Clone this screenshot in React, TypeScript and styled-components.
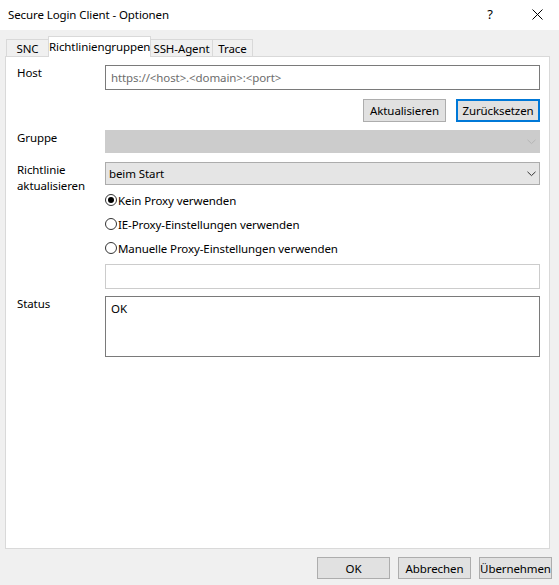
import React from "react";
import styled, { createGlobalStyle } from "styled-components";

const GlobalStyle = createGlobalStyle`
  html, body {
    margin: 0;
    padding: 0;
    background: #f0f0f0;
  }
  body {
    font-family: "Noto Sans", "Open Sans", sans-serif;
    font-size: 11.5px;
    letter-spacing: -0.1px;
    color: #000;
  }
  * { box-sizing: border-box; }
`;

const Window = styled.div`
  width: 559px;
  height: 585px;
  background: #f0f0f0;
  display: flex;
  flex-direction: column;
  overflow: hidden;
`;

const TitleBar = styled.div`
  height: 30px;
  background: #ffffff;
  display: flex;
  align-items: center;
  padding-left: 8px;
  flex-shrink: 0;
`;

const Title = styled.div`
  flex: 1;
  line-height: 16px;
  margin-top: -1px;
`;

const TitleButtons = styled.div`
  display: flex;
  align-items: center;
  height: 100%;
`;

const HelpGlyph = styled.div`
  width: 46px;
  text-align: center;
  font-size: 13px;
  line-height: 16px;
  margin-top: -2px;
  padding-left: 0px;
`;

const CloseButton = styled.div`
  width: 46px;
  height: 100%;
  display: flex;
  align-items: center;
  justify-content: center;
  padding-left: 2px;
  padding-bottom: 2px;
`;

const TabStrip = styled.div`
  display: flex;
  align-items: flex-end;
  height: 20px;
  margin-top: 6px;
  padding-left: 6px;
  flex-shrink: 0;
`;

const Tab = styled.div<{ $active?: boolean; $w: number }>`
  width: ${(p) => p.$w}px;
  height: ${(p) => (p.$active ? 21 : 17)}px;
  margin-bottom: ${(p) => (p.$active ? -1 : 0)}px;
  margin-left: -1px;
  &:first-child { margin-left: 0; }
  border: 1px solid #d9d9d9;
  border-bottom: none;
  background: ${(p) => (p.$active ? "#ffffff" : "#f0f0f0")};
  position: ${(p) => (p.$active ? "relative" : "static")};
  z-index: ${(p) => (p.$active ? 1 : 0)};
  line-height: 15px;
  padding-top: ${(p) => (p.$active ? 2 : 1)}px;
  text-align: center;
  white-space: nowrap;
`;

const Panel = styled.div`
  height: 493px;
  margin-left: 5px;
  width: 545px;
  background: #ffffff;
  border: 1px solid #d9d9d9;
  padding: 8px 9px 0 11px;
  display: flex;
  flex-direction: column;
  flex-shrink: 0;
`;

const FieldRow = styled.div<{ $mt?: number }>`
  display: grid;
  grid-template-columns: 88px 435px;
  margin-top: ${(p) => p.$mt ?? 0}px;
`;

const Label = styled.div<{ $span?: number }>`
  line-height: 16px;
  grid-row: ${(p) => (p.$span ? `1 / span ${p.$span}` : "auto")};
`;

const TextBox = styled.div<{ $h: number; $muted?: boolean; $light?: boolean }>`
  height: ${(p) => p.$h}px;
  border: 1px solid ${(p) => (p.$light ? "#cccccc" : "#7a7a7a")};
  background: #ffffff;
  color: ${(p) => (p.$muted ? "#6d6d6d" : "#000000")};
  padding: 4px 5px 0 5px;
  line-height: 15px;
  white-space: nowrap;
`;

const Combo = styled.div<{ $disabled?: boolean }>`
  height: 23px;
  border: 1px solid ${(p) => (p.$disabled ? "#cccccc" : "#acacac")};
  background: ${(p) => (p.$disabled ? "#cccccc" : "#e5e5e5")};
  display: flex;
  align-items: center;
  justify-content: space-between;
  padding: 0 3px 0 3px;
`;

const ComboText = styled.span`
  line-height: 15px;
`;

const ButtonRow = styled.div<{ $mt: number }>`
  display: flex;
  justify-content: flex-end;
  gap: 10px;
  margin-top: ${(p) => p.$mt}px;
`;

const Button = styled.div<{ $w: number; $default?: boolean; $h?: number }>`
  width: ${(p) => p.$w}px;
  height: ${(p) => p.$h ?? 23}px;
  background: #e1e1e1;
  border: ${(p) => (p.$default ? "2px solid #0078d7" : "1px solid #adadad")};
  display: flex;
  align-items: center;
  justify-content: center;
  line-height: 15px;
  white-space: nowrap;
`;

const RadioGroup = styled.div`
  display: flex;
  flex-direction: column;
  margin-top: 3px;
  grid-column: 2;
`;

const RadioRow = styled.div`
  height: 24px;
  display: flex;
  align-items: center;
  gap: 1px;
`;

const RadioCircle = styled.span<{ $checked?: boolean }>`
  width: 12px;
  height: 12px;
  border-radius: 50%;
  border: 1px solid #333333;
  background: #ffffff;
  display: flex;
  align-items: center;
  justify-content: center;
  flex-shrink: 0;
  &::after {
    content: "";
    display: ${(p) => (p.$checked ? "block" : "none")};
    width: 6px;
    height: 6px;
    border-radius: 50%;
    background: #000000;
  }
`;

const RadioLabel = styled.span`
  line-height: 15px;
  white-space: nowrap;
`;

const Footer = styled.div`
  flex: 1;
  display: flex;
  justify-content: flex-end;
  align-items: flex-start;
  gap: 8px;
  padding: 8px 7px 0 0;
`;

const Chevron = ({ color }: { color: string }) => (
  <svg width="9" height="6" viewBox="0 0 9 6">
    <path d="M0.5 0.8 L4.5 4.6 L8.5 0.8" fill="none" stroke={color} strokeWidth="1" />
  </svg>
);

const CloseIcon = () => (
  <svg width="11" height="11" viewBox="0 0 11 11">
    <path d="M0.5 0.5 L10.5 10.5 M10.5 0.5 L0.5 10.5" stroke="#000" strokeWidth="1" fill="none" />
  </svg>
);

export default function App() {
  return (
    <>
      <GlobalStyle />
      <Window>
        <TitleBar>
          <Title>Secure Login Client - Optionen</Title>
          <TitleButtons>
            <HelpGlyph>?</HelpGlyph>
            <CloseButton>
              <CloseIcon />
            </CloseButton>
          </TitleButtons>
        </TitleBar>
        <TabStrip>
          <Tab $w={43}>SNC</Tab>
          <Tab $w={103} $active>
            Richtliniengruppen
          </Tab>
          <Tab $w={63}>SSH-Agent</Tab>
          <Tab $w={41}>Trace</Tab>
        </TabStrip>
        <Panel>
          <FieldRow>
            <Label>Host</Label>
            <TextBox $h={25} $muted>
              https://&lt;host&gt;.&lt;domain&gt;:&lt;port&gt;
            </TextBox>
          </FieldRow>
          <ButtonRow $mt={9}>
            <Button $w={83}>Aktualisieren</Button>
            <Button $w={84} $default>
              Zurücksetzen
            </Button>
          </ButtonRow>
          <FieldRow $mt={8}>
            <Label>Gruppe</Label>
            <Combo $disabled>
              <ComboText />
              <Chevron color="#b5b5b5" />
            </Combo>
          </FieldRow>
          <FieldRow $mt={9}>
            <Label $span={2}>
              Richtlinie
              <br />
              aktualisieren
            </Label>
            <Combo>
              <ComboText>beim Start</ComboText>
              <Chevron color="#333333" />
            </Combo>
            <RadioGroup>
              <RadioRow>
                <RadioCircle $checked />
                <RadioLabel>Kein Proxy verwenden</RadioLabel>
              </RadioRow>
              <RadioRow>
                <RadioCircle />
                <RadioLabel>IE-Proxy-Einstellungen verwenden</RadioLabel>
              </RadioRow>
              <RadioRow>
                <RadioCircle />
                <RadioLabel>Manuelle Proxy-Einstellungen verwenden</RadioLabel>
              </RadioRow>
            </RadioGroup>
          </FieldRow>
          <FieldRow $mt={4}>
            <span />
            <TextBox $h={25} $light />
          </FieldRow>
          <FieldRow $mt={7}>
            <Label>Status</Label>
            <TextBox $h={61}>OK</TextBox>
          </FieldRow>
        </Panel>
        <Footer>
          <Button $w={73} $h={22}>OK</Button>
          <Button $w={73} $h={22}>Abbrechen</Button>
          <Button $w={73} $h={22}>Übernehmen</Button>
        </Footer>
      </Window>
    </>
  );
}
